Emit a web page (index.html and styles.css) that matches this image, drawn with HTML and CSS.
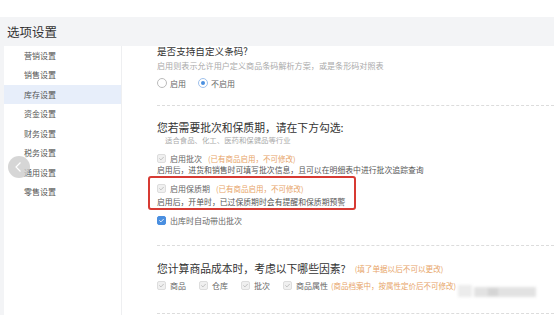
FILE: index.html
```html
<!DOCTYPE html>
<html lang="zh">
<head>
<meta charset="utf-8">
<link rel="stylesheet" href="styles.css">
</head>
<body>
<div class="topgap"></div>
<header class="hdr">选项设置</header>
<div class="wrap">
  <nav class="side">
    <div class="item">营销设置</div>
    <div class="item">销售设置</div>
    <div class="item active">库存设置</div>
    <div class="item">资金设置</div>
    <div class="item">财务设置</div>
    <div class="item">税务设置</div>
    <div class="item">通用设置</div>
    <div class="item">零售设置</div>
  </nav>
  <main class="main">
    <section class="sec sec1">
      <div class="t1">是否支持自定义条码?</div>
      <div class="d1">启用则表示允许用户定义商品条码解析方案，或是条形码对照表</div>
      <div class="radios">
        <label class="radio"><span class="rc"></span>启用</label>
        <label class="radio"><span class="rc on"></span>不启用</label>
      </div>
    </section>
    <section class="sec sec2">
      <div class="t2">您若需要批次和保质期，请在下方勾选:</div>
      <div class="d2">适合食品、化工、医药和保健品等行业</div>
      <div class="row r1"><span class="cb dis"><svg viewBox="0 0 10 10"><path d="M2.3 5.2 L4.2 7 L7.8 3.2" /></svg></span><span class="lbl">启用批次</span><span class="note">(已有商品启用，不可修改)</span></div>
      <div class="d3">启用后，进货和销售时可填写批次信息，且可以在明细表中进行批次追踪查询</div>
      <div class="redbox">
        <div class="row"><span class="cb dis"><svg viewBox="0 0 10 10"><path d="M2.3 5.2 L4.2 7 L7.8 3.2" /></svg></span><span class="lbl">启用保质期</span><span class="note">(已有商品启用，不可修改)</span></div>
        <div class="d3 d4">启用后，开单时，已过保质期时会有提醒和保质期预警</div>
      </div>
      <div class="row r3"><span class="cb chk"><svg viewBox="0 0 10 10"><path d="M2.3 5.2 L4.2 7 L7.8 3.2" /></svg></span><span class="lbl">出库时自动带出批次</span></div>
    </section>
    <section class="sec sec3">
      <div class="t3row"><span class="t2">您计算商品成本时，考虑以下哪些因素?</span><span class="note n3">(填了单据以后不可以更改)</span></div>
      <div class="row r4">
        <span class="opt"><span class="cb dis"><svg viewBox="0 0 10 10"><path d="M2.3 5.2 L4.2 7 L7.8 3.2" /></svg></span><span class="lbl">商品</span></span>
        <span class="opt"><span class="cb dis"><svg viewBox="0 0 10 10"><path d="M2.3 5.2 L4.2 7 L7.8 3.2" /></svg></span><span class="lbl">仓库</span></span>
        <span class="opt"><span class="cb dis"><svg viewBox="0 0 10 10"><path d="M2.3 5.2 L4.2 7 L7.8 3.2" /></svg></span><span class="lbl">批次</span></span>
        <span class="opt"><span class="cb dis"><svg viewBox="0 0 10 10"><path d="M2.3 5.2 L4.2 7 L7.8 3.2" /></svg></span><span class="lbl">商品属性</span><span class="note n4">(商品档案中，按属性定价后不可修改)</span></span>
      </div>
    </section>
  </main>
</div>
<div class="backbtn"><svg viewBox="0 0 22 22"><path d="M12.5 6.5 L8 11 L12.5 15.5" /></svg></div>
<div class="blob"><span class="b1"></span><span class="b2"></span><span class="b3"></span></div>
</body>
</html>
```
FILE: styles.css
```css
html, body {
  margin: 0;
  padding: 0;
  width: 554px;
  height: 315px;
  overflow: hidden;
  background: #ffffff;
  font-family: "Noto Sans CJK SC", "Noto Sans", sans-serif;
  color: #333;
}
.topgap { height: 17px; background: #fff; }
.hdr {
  height: 29px;
  background: #f3f4f6;
  padding-left: 7px;
  font-size: 12.5px;
  line-height: 29px;
  color: #333;
}
.wrap {
  display: flex;
  background: #f3f4f6;
  padding-left: 4px;
  height: 269px;
}
.side {
  width: 117px;
  background: #fff;
  border-right: 1px solid #eeeff1;
  flex: none;
}
.item {
  height: 19.45px;
  line-height: 19.45px;
  padding-left: 20px;
  font-size: 8px;
  color: #555;
}
.item.active { background: #e7eefa; color: #555; }
.main {
  flex: 1;
  background: #fff;
  padding-left: 35px;
}
.sec { border-bottom: 1px dashed #dcdcdc; }
.sec1 { padding-bottom: 16px; }
.t1 { font-size: 9.6px; line-height: 11px; color: #333; }
.d1 { margin-top: 4px; font-size: 8.1px; line-height: 10px; color: #aaa; }
.radios { display: flex; gap: 12px; margin-top: 6px; height: 12px; align-items: center; }
.radio { display: flex; align-items: center; gap: 3px; font-size: 8px; color: #666; }
.rc {
  width: 8px; height: 8px; border-radius: 50%;
  border: 1px solid #bbb; background: #fff; box-sizing: content-box;
  position: relative;
}
.rc.on { border-color: #9fc1ec; }
.rc.on::after {
  content: ""; position: absolute; left: 2px; top: 2px;
  width: 4px; height: 4px; border-radius: 50%; background: #4a8fe0;
}
.sec2 { padding-top: 14px; padding-bottom: 19px; }
.t2 { font-size: 10.8px; line-height: 14px; color: #333; }
.d2 { margin-top: 1px; padding-left: 8px; font-size: 7.4px; line-height: 10px; color: #aaa; }
.row { display: flex; align-items: center; height: 12px; }
.r1 { margin-top: 7px; }
.cb {
  width: 9px; height: 9px; border-radius: 2px; flex: none;
  display: flex; align-items: center; justify-content: center;
  box-sizing: border-box;
}
.cb svg { width: 9px; height: 9px; }
.cb path { fill: none; stroke-width: 1.2; stroke-linecap: round; stroke-linejoin: round; }
.cb.dis { background: #f0f0f0; border: 1px solid #ddd; }
.cb.dis path { stroke: #b8b8b8; }
.cb.chk { background: #4a8fe0; border: 1px solid #4a8fe0; }
.cb.chk path { stroke: #fff; }
.lbl { margin-left: 4px; font-size: 8px; color: #666; }
.note { margin-left: 6px; font-size: 7.5px; color: #e7a467; }
.d3 { margin-top: 1px; font-size: 7.85px; line-height: 10px; color: #555; }
.redbox {
  margin-top: 1px;
  margin-left: -9px;
  width: 208px;
  height: 34px;
  box-sizing: border-box;
  border: 2px solid #d73a33;
  border-radius: 3px;
  padding: 4px 0 0 7px;
}
.d4 { margin-top: 3px; }
.r3 { margin-top: 4px; }
.sec3 { padding-top: 15px; padding-bottom: 22px; }
.t3row { display: flex; align-items: center; height: 14px; }
.n3 { margin-left: 9px; font-size: 7.6px; }
.r4 { margin-top: 4px; gap: 13px; }
.opt { display: flex; align-items: center; }
.n4 { margin-left: 3px; font-size: 7.5px; }
.backbtn {
  position: absolute;
  left: 8px; top: 156px;
  width: 22px; height: 22px; border-radius: 50%;
  background: rgba(200, 200, 200, 0.75);
}
.backbtn svg { width: 22px; height: 22px; display: block; }
.backbtn path { fill: none; stroke: #fff; stroke-width: 1.2; }
.blob {
  position: absolute;
  left: 458px; top: 283px;
  width: 86px; height: 18px;
  filter: blur(1.5px);
}
.blob span { position: absolute; background: #e2e2e2; }
.b1 { left: 0; top: 2px; width: 14px; height: 12px; background: #ececec !important; }
.b2 { left: 16px; top: 4px; width: 62px; height: 10px; }
.b3 { left: 30px; top: 5px; width: 10px; height: 8px; background: #d4d4d4 !important; }
```
